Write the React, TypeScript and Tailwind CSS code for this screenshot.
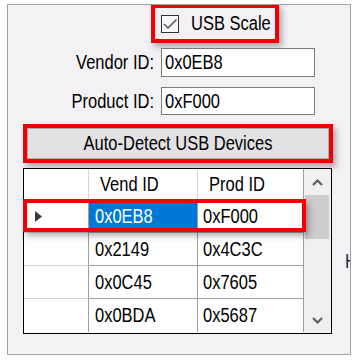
import React from "react";

const T = ({ children, className = "" }: { children: React.ReactNode; className?: string }) => (
  <span className={"inline-block origin-center scale-y-[1.2] leading-none whitespace-nowrap " + className}>{children}</span>
);

const Up = () => (
  <svg width="11" height="7" viewBox="0 0 11 7">
    <polyline points="1,6 5.5,1.5 10,6" fill="none" stroke="#5f5f5f" strokeWidth="2.2" />
  </svg>
);
const Down = () => (
  <svg width="11" height="7" viewBox="0 0 11 7">
    <polyline points="1,1 5.5,5.5 10,1" fill="none" stroke="#5f5f5f" strokeWidth="2.2" />
  </svg>
);

const rows = [
  ["0x0EB8", "0xF000"],
  ["0x2149", "0x4C3C"],
  ["0x0C45", "0x7605"],
  ["0x0BDA", "0x5687"],
];

export default function App() {
  return (
    <div className="w-[358px] h-[362px] bg-white pt-[4px] pl-[7px] font-['Liberation_Sans',Arial,sans-serif] text-[16.5px] text-black">
      <div className="relative w-[344px] h-[351px] border border-[#a0a0a0] bg-[#f4f1f5] overflow-hidden flex flex-col">
        {/* USB Scale checkbox */}
        <div className="ml-[143px] -mt-[1px] w-[128px] h-[39px] border-4 border-[#f00000] shadow-[3px_4px_6px_rgba(0,0,0,0.3)] flex items-center shrink-0">
          <div className="ml-[6px] w-[18px] h-[18px] border-[1.5px] border-[#333] bg-[#f7f7f7] flex items-center justify-center">
            <svg width="16" height="16" viewBox="0 0 16 16">
              <polyline points="2,8 6,12 14.5,3.5" fill="none" stroke="#555" strokeWidth="1.5" />
            </svg>
          </div>
          <T className="ml-[12px]">USB Scale</T>
        </div>

        {/* Vendor ID */}
        <div className="mt-[5px] flex items-center h-[29px] shrink-0">
          <div className="w-[147px] text-right pr-[1px]"><T>Vendor ID:</T></div>
          <div className="ml-[6px] w-[154px] h-[29px] border border-[#7a7a7a] bg-white flex items-center pl-[3px]">
            <T>0x0EB8</T>
          </div>
        </div>

        {/* Product ID */}
        <div className="mt-[10px] flex items-center h-[28px] shrink-0">
          <div className="w-[147px] text-right pr-[1px]"><T>Product ID:</T></div>
          <div className="ml-[6px] w-[154px] h-[28px] border border-[#7a7a7a] bg-white flex items-center pl-[3px]">
            <T>0xF000</T>
          </div>
        </div>

        {/* Auto-detect button */}
        <div className="mt-[9px] ml-[15px] w-[310px] h-[39px] border-4 border-[#f00000] shadow-[3px_4px_6px_rgba(0,0,0,0.3)] shrink-0">
          <div className="w-full h-full border border-[#adadad] bg-[#e3e1e4] flex items-center justify-center">
            <T>Auto-Detect USB Devices</T>
          </div>
        </div>

        {/* Grid */}
        <div className="relative mt-[5px] ml-[15px] w-[309px] h-[166px] border border-black flex bg-white shrink-0">
          <div className="flex flex-col w-[280px]">
            <div className="flex h-[31px] shrink-0">
              <div className="w-[65px] border-r border-[#d6d6d6]" />
              <div className="w-[109px] border-r border-[#d6d6d6] flex items-center pl-[11px]"><T>Vend ID</T></div>
              <div className="w-[106px] border-r border-[#a0a0a0] flex items-center pl-[11px]"><T>Prod ID</T></div>
            </div>
            {rows.map((r, i) => (
              <div key={i} className="flex h-[33px] shrink-0">
                <div className={"w-[65px] border-r border-[#a0a0a0] flex items-center pl-[11px] " + (i < 3 ? "border-b border-b-[#d4d4d4]" : "")}>
                  {i === 0 && (
                    <svg width="7" height="11" viewBox="0 0 7 11">
                      <polygon points="0,0 7,5.5 0,11" fill="#3a3a3a" />
                    </svg>
                  )}
                </div>
                <div className={"w-[109px] border-r border-[#a0a0a0] flex items-center pl-[6px] " + (i < 3 ? "border-b " : "") + (i === 0 ? "bg-[#0078d7] text-white" : "")}>
                  <T>{r[0]}</T>
                </div>
                <div className={"w-[106px] border-r border-[#a0a0a0] flex items-center pl-[5px] " + (i < 3 ? "border-b" : "")}>
                  <T>{r[1]}</T>
                </div>
              </div>
            ))}
          </div>
          {/* Scrollbar */}
          <div className="w-[27px] bg-[#f0f0f0] flex flex-col">
            <div className="h-[26px] flex items-center justify-center"><Up /></div>
            <div className="ml-[1px] w-[24px] h-[44px] bg-[#cdcdcd]" />
            <div className="flex-1" />
            <div className="h-[26px] flex items-center justify-center"><Down /></div>
          </div>
          {/* Annotation on selected row */}
          <div className="absolute left-[-1px] top-[30px] w-[283px] h-[33px] border-4 border-[#f00000] shadow-[3px_4px_6px_rgba(0,0,0,0.3)]" />
        </div>

        {/* clipped label at right edge */}
        <span className="absolute left-[337px] top-[244px] text-[#1a1a50]"><T>H</T></span>
      </div>
    </div>
  );
}
